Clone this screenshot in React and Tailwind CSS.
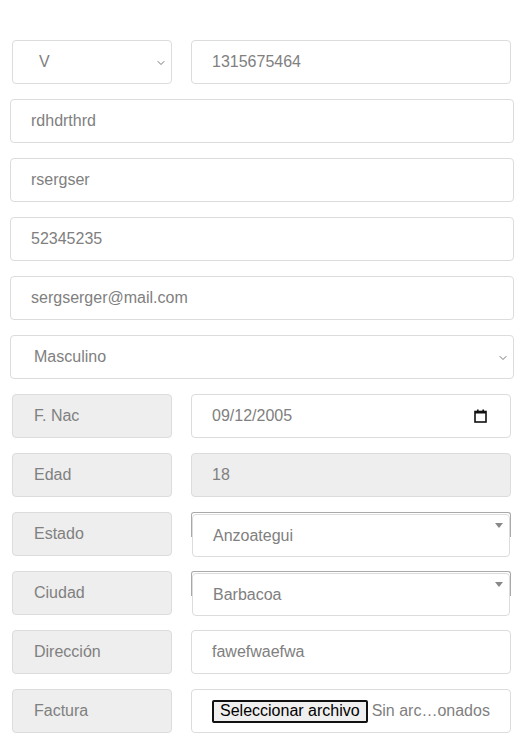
import { ChevronDown } from "lucide-react";

const font = { fontFamily: '"Liberation Sans", Arial, sans-serif' };

const Field = ({ value, className = "" }) => (
  <div className={`h-[44px] flex items-center rounded-[4px] border border-[#dcdcdc] bg-white pl-[20px] text-base text-[#808080] ${className}`}>
    {value}
  </div>
);

const SelectBox = ({ value, textPad = "pl-[23px]" }) => (
  <div className={`h-[44px] flex items-center justify-between rounded-[4px] border border-[#dcdcdc] bg-white ${textPad} pr-[4px] text-base text-[#808080]`}>
    <span>{value}</span>
    <ChevronDown size={12} strokeWidth={2} className="mt-[2px] text-[#777]" />
  </div>
);

const Label = ({ text }) => (
  <div className="h-[44px] flex items-center rounded-[4px] border border-[#dcdcdc] bg-[#eeeeee] pl-[21px] text-base text-[#808080]">
    {text}
  </div>
);

const Row = ({ left, right }) => (
  <div className="flex gap-[19px] pl-[2px] pr-[3px]">
    <div className="w-[160px]">{left}</div>
    <div className="w-[320px]">{right}</div>
  </div>
);

const Select2 = ({ value }) => (
  <div className="relative h-[44px] pt-[2px]">
    <div className="absolute left-0 top-0 h-[25px] w-full rounded-t-[3px] border-x border-t border-[#a9a9a9]" />
    <div className="relative mx-px h-[43px] flex items-center rounded-[4px] border border-[#dcdcdc] bg-white pl-[20px] text-base text-[#808080]">
      {value}
      <span className="absolute right-[6px] top-[8px] h-0 w-0 border-x-[4px] border-t-[5px] border-x-transparent border-t-[#888]" />
    </div>
  </div>
);

const App = () => (
  <div className="bg-white min-h-[741px] pt-[40px]" style={font}>
    <div className="ml-[10px] w-[504px] flex flex-col gap-[15px]">
      <Row left={<SelectBox value="V" textPad="pl-[26px]" />} right={<Field value="1315675464" />} />
      <Field value="rdhdrthrd" />
      <Field value="rsergser" />
      <Field value="52345235" />
      <Field value="sergserger@mail.com" />
      <SelectBox value="Masculino" />
      <Row
        left={<Label text="F. Nac" />}
        right={
          <div className="h-[44px] flex items-center justify-between rounded-[4px] border border-[#dcdcdc] bg-white pl-[20px] pr-[23px] text-base text-[#808080]">
            <span>09/12/2005</span>
            <svg width="13" height="14" viewBox="0 0 13 14" fill="none">
              <rect x="1" y="2.5" width="11" height="10.5" stroke="#111" strokeWidth="1.6" />
              <rect x="1" y="2" width="11" height="2.5" fill="#111" />
              <rect x="3" y="0.5" width="1.6" height="2" fill="#111" />
              <rect x="8.4" y="0.5" width="1.6" height="2" fill="#111" />
            </svg>
          </div>
        }
      />
      <Row left={<Label text="Edad" />} right={<div className="h-[44px] flex items-center rounded-[4px] border border-[#dcdcdc] bg-[#eeeeee] pl-[20px] text-base text-[#808080]">18</div>} />
      <Row left={<Label text="Estado" />} right={<Select2 value="Anzoategui" />} />
      <Row left={<Label text="Ciudad" />} right={<Select2 value="Barbacoa" />} />
      <Row left={<Label text="Dirección" />} right={<Field value="fawefwaefwa" />} />
      <Row
        left={<Label text="Factura" />}
        right={
          <div className="h-[44px] flex items-center rounded-[4px] border border-[#dcdcdc] bg-white pl-[20px] text-base text-[#808080]">
            <button className="h-[23px] rounded-[2px] border-2 border-[#111] bg-[#efefef] px-[6px] text-base leading-none text-black">
              Seleccionar archivo
            </button>
            <span className="ml-[4px]">Sin arc…onados</span>
          </div>
        }
      />
    </div>
  </div>
);

export default App;
